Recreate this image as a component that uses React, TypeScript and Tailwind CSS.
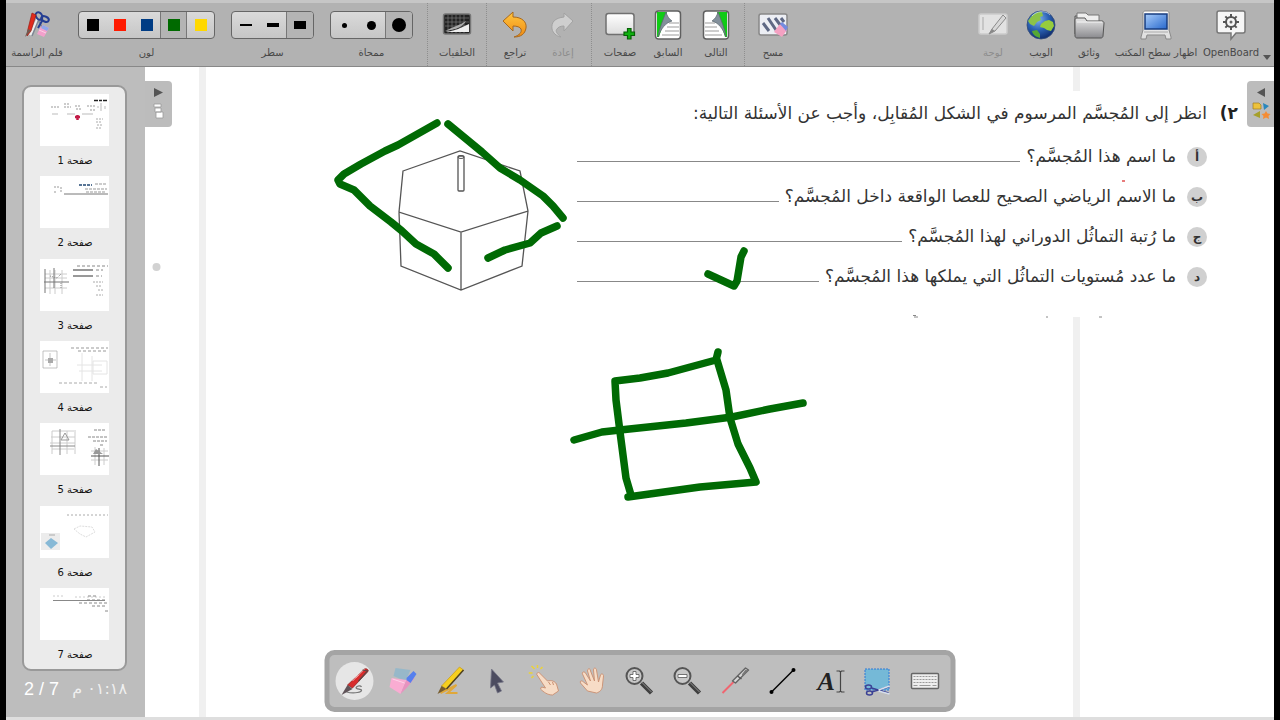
import { useState } from "react";
import type { ReactNode } from "react";
import clsx from "clsx";

interface ToolProps {
  label: string;
  className?: string;
  disabled?: boolean;
  children: ReactNode;
}

const ui = "font-['DejaVu_Sans',sans-serif]";

function Tool({ label, className = "w-12", disabled = false, children }: ToolProps) {
  return (
    <button
      disabled={disabled}
      className={clsx(
        "flex shrink-0 flex-col items-center text-[10px] leading-3 whitespace-nowrap",
        disabled ? "text-[#8c8c8c]" : "text-[#484848]",
        className
      )}
    >
      <span className="flex h-11 items-center">{children}</span>
      <span>{label}</span>
    </button>
  );
}

interface Option {
  name: string;
  mark: ReactNode;
}

// Segmented control used for colour, line and eraser sizes
function Group({ label, options, initial }: { label: string; options: Option[]; initial: number }) {
  const [active, setActive] = useState(initial);
  return (
    <div role="group" aria-label={label} className="flex shrink-0 flex-col items-center text-[10px] leading-3 text-[#484848]">
      <div className="flex h-11 items-center">
        <div className="flex h-7 overflow-hidden rounded border border-[#666] bg-linear-to-b from-[#dadada] to-[#c6c6c6]">
          {options.map((o, i) => (
            <button
              key={o.name}
              aria-label={o.name}
              aria-pressed={active === i}
              onClick={() => setActive(i)}
              className={clsx(
                "flex w-[27px] items-center justify-center",
                active === i && "border-l border-[#777] bg-[#b4b4b4]",
                active === i && i < options.length - 1 && "border-r"
              )}
            >
              {o.mark}
            </button>
          ))}
        </div>
      </div>
      <span>{label}</span>
    </div>
  );
}

const colors: Option[] = [
  { name: "أسود", mark: <span className="h-3 w-3 bg-black" /> },
  { name: "أحمر", mark: <span className="h-3 w-3 bg-[#ff1a00]" /> },
  { name: "أزرق", mark: <span className="h-3 w-3 bg-[#003c84]" /> },
  { name: "أخضر", mark: <span className="h-3 w-3 bg-[#006a00]" /> },
  { name: "أصفر", mark: <span className="h-3 w-3 bg-[#ffd800]" /> },
];

const lines: Option[] = [
  { name: "رفيع", mark: <span className="h-0.5 w-3 bg-black" /> },
  { name: "متوسط", mark: <span className="h-1 w-3 bg-black" /> },
  { name: "سميك", mark: <span className="h-2 w-3 bg-black" /> },
];

const erasers: Option[] = [
  { name: "صغير", mark: <span className="h-[5px] w-[5px] rounded-full bg-black" /> },
  { name: "وسط", mark: <span className="h-[9px] w-[9px] rounded-full bg-black" /> },
  { name: "كبير", mark: <span className="h-3.5 w-3.5 rounded-full bg-black" /> },
];

function Separator() {
  return <span className="w-px shrink-0 self-stretch border-l border-dotted border-[#8e8e8e]" />;
}

function Defs() {
  return (
    <svg width="0" height="0" className="absolute" aria-hidden="true">
      <defs>
        <linearGradient id="paper" x1="0" y1="0" x2="0" y2="1">
          <stop offset="0" stopColor="#fff" />
          <stop offset="1" stopColor="#dcdcdc" />
        </linearGradient>
        <linearGradient id="screen" x1="0" y1="0" x2="1" y2="1">
          <stop offset="0" stopColor="#a9cdfa" />
          <stop offset="1" stopColor="#2667cc" />
        </linearGradient>
        <linearGradient id="metal" x1="0" y1="0" x2="0" y2="1">
          <stop offset="0" stopColor="#e6e6e6" />
          <stop offset="1" stopColor="#8a8a8e" />
        </linearGradient>
        <linearGradient id="orange" x1="0" y1="0" x2="0" y2="1">
          <stop offset="0" stopColor="#ffc640" />
          <stop offset="1" stopColor="#f08c14" />
        </linearGradient>
        <radialGradient id="sea" cx="0.4" cy="0.3" r="0.75">
          <stop offset="0" stopColor="#82b4ee" />
          <stop offset="0.5" stopColor="#2b62b4" />
          <stop offset="1" stopColor="#0c2768" />
        </radialGradient>
      </defs>
    </svg>
  );
}

function PensIcon() {
  return (
    <svg width="32" height="32" viewBox="0 0 32 32">
      <path d="M17 10 9 26" stroke="#eee" strokeWidth="3" />
      <path d="M18 10 11 27M15 7l6 11" stroke="#7d8794" strokeWidth="1.5" />
      <g fill="none" stroke="#253e93" strokeWidth="2">
        <ellipse cx="18" cy="7" rx="3" ry="4" transform="rotate(-35 18 7)" />
        <ellipse cx="24" cy="10" rx="4" ry="2.5" transform="rotate(25 24 10)" />
        <path d="m20 10 1 2-4 7" />
      </g>
      <path d="m11 4 4 2-5 16-4 5 1-7z" fill="#e22a1c" stroke="#9b1b13" strokeWidth=".7" />
      <path d="m7 20 3 1.5L4 28z" fill="#6f5a50" />
      <path d="m19 19 3-3 6 3-5 9-7-3z" fill="#f3a0cc" />
      <path d="m22 16 6 3-2 3-6-3z" fill="#8fa8ea" />
      <path d="m18 21 7 3" stroke="#fbd0e6" />
    </svg>
  );
}

function BackgroundsIcon() {
  return (
    <svg width="32" height="32" viewBox="0 0 32 32">
      <rect x="2.5" y="5" width="27" height="20" rx="2" fill="#222" stroke="#777" strokeWidth="1.5" />
      <path d="M7 6v18M11 6v18M15 6v18M19 6v18M23 6v18M4 9h24M4 13h24M4 17h24" stroke="#777" strokeWidth=".7" />
      <path d="M4 23c9-1 16-4 24-8v8z" fill="#eee" />
      <path d="M4 22c8-4 15-6 21-10-3 6-11 9-21 10z" fill="#aaa" />
    </svg>
  );
}

function UndoIcon() {
  return (
    <svg width="32" height="32" viewBox="0 0 32 32">
      <path d="m4 12 10-9v5c9 0 14 5 13 11-1 6-5 9-12 9 6-2 8-5 7-8-1-2-4-3-8-3v5z" fill="url(#orange)" stroke="#a8681c" strokeWidth="1" strokeLinejoin="round" />
    </svg>
  );
}

function RedoIcon() {
  return (
    <svg width="32" height="32" viewBox="0 0 32 32">
      <path d="m26 12-9-8v4C8 9 4 13 5 20c1 4 4 7 9 8-4-3-6-6-4-8 1-2 4-3 7-3v5z" fill="#cfcfcf" stroke="#a2a2a2" strokeWidth="1" strokeLinejoin="round" />
    </svg>
  );
}

function NewPageIcon() {
  return (
    <svg width="32" height="32" viewBox="0 0 32 32">
      <rect x="2" y="4.500" width="28" height="21" rx="2.5" fill="url(#paper)" stroke="#707070" strokeWidth="1.5" />
      <path d="M23.500 19.500h3.500v3.500h3.500v3.500h-3.500V30h-3.500v-3.500H20V23h3.500z" fill="#10b010" stroke="#075f07" strokeWidth="1.200" />
    </svg>
  );
}

function PageTurnIcon({ flip = false }: { flip?: boolean }) {
  return (
    <svg width="32" height="32" viewBox="0 0 32 32" className={clsx(flip && "-scale-x-100")}>
      <rect x="3.500" y="2" width="25" height="28" rx="3" fill="#fff" stroke="#606060" strokeWidth="1.500" />
      <path d="M17 14h10M15 18h12M13 22h14M10 26h17" stroke="#9b9b9b" />
      <path d="M5 3h10L7 28H5z" fill="#10cb16" />
      <path d="M14 3c1 4 3 7 6 9-7 2-11 8-14 16 1-8 5-17 8-25z" fill="#83909b" stroke="#5a666d" strokeWidth=".7" />
    </svg>
  );
}

function EraseIcon() {
  return (
    <svg width="32" height="32" viewBox="0 0 32 32">
      <rect x="2" y="5" width="28" height="21" rx="2" fill="#eceef4" stroke="#888" strokeWidth="1.500" />
      <path d="m6 14 6 8M11 9l8 12M18 9l6 8M24 9l3 4" stroke="#5e6884" strokeWidth="3" />
      <path d="m19 20 4-5 7 6-5 7-8-5z" fill="#f4a1c2" />
      <path d="m23 15 2-2 6 5-2 4z" fill="#748be0" />
    </svg>
  );
}

function BoardIcon() {
  return (
    <svg width="32" height="32" viewBox="0 0 32 32">
      <rect x="2" y="5" width="28" height="20" rx="2" fill="#e2e2e2" stroke="#ccc" strokeWidth="1.500" />
      <path d="M6 8v13" stroke="#aaa" />
      <path d="m15 20 11-14 3 3-11 13-6 3z" fill="#d8d8d8" stroke="#8a8a8a" strokeWidth="1" />
      <path d="m12 25 3-5 3 2z" fill="#888" />
    </svg>
  );
}

function WebIcon() {
  return (
    <svg width="32" height="32" viewBox="0 0 32 32">
      <circle cx="16" cy="16" r="14" fill="url(#sea)" stroke="#364d79" strokeWidth=".8" />
      <path d="M6 8c3-4 8-6 11-5l1 4-3 1 1 3-4 2-3 4-4-2-2-3z" fill="#8cc348" />
      <path d="m16 15 4-3 4-1 4 2 1 4-3 5-4-1-3-2-4-1z" fill="#96cc3d" />
      <path d="m7 22 5-1 3 4v4c-4-1-7-3-8-7z" fill="#55a834" />
      <path d="M7 7c4-5 14-6 18-1" stroke="#d9e9ff" opacity=".6" fill="none" />
    </svg>
  );
}

function DocumentsIcon() {
  return (
    <svg width="32" height="32" viewBox="0 0 32 32">
      <path d="M2 7h9l2 3h10v15H2z" fill="#bbb" stroke="#555" />
      <path d="M4 4h9l2 2h11v8H4z" fill="#eee" stroke="#777" />
      <path d="M2 27V11c0-1 1-2 2-2h8l2 3h15c1 0 2 1 2 2l-1 13c0 1-1 2-2 2H4c-1 0-2-1-2-2z" fill="url(#metal)" stroke="#555" />
      <path d="M4 13h25" stroke="#f5f5f5" />
    </svg>
  );
}

function DesktopIcon() {
  return (
    <svg width="32" height="32" viewBox="0 0 32 32">
      <path d="M3 4c0-1 1-2 2-2h22c1 0 2 1 2 2v17l2 7v2h-5l-1-4H7l-1 4H1v-2l2-7z" fill="url(#paper)" stroke="#898989" />
      <rect x="5" y="5" width="22" height="15" fill="url(#screen)" stroke="#173c7f" strokeWidth="1.500" />
      <path d="M4 23h24" stroke="#aaa" />
    </svg>
  );
}

function OpenBoardIcon() {
  const teeth = [0, 45, 90, 135, 180, 225, 270, 315];
  return (
    <svg width="32" height="32" viewBox="0 0 32 32">
      <path d="M4 2h24c1 0 2 1 2 2v18c0 1-1 2-2 2h-7l-5 6v-6H4c-1 0-2-1-2-2V4c0-1 1-2 2-2z" fill="#f6f6f6" stroke="#777" strokeWidth="1.500" />
      <circle cx="16" cy="13" r="5" fill="none" stroke="#555" strokeWidth="2" />
      <circle cx="16" cy="13" r="1.500" fill="#666" />
      {teeth.map((a) => (
        <path key={a} d="M16 8V5" stroke="#555" strokeWidth="2" transform={`rotate(${a} 16 13)`} />
      ))}
    </svg>
  );
}

function Toolbar() {
  return (
    <header className={clsx("flex h-[67px] shrink-0 border-t-[3px] border-b border-t-[#c6c6c6] border-b-[#888] bg-[#b2b2b2]", ui)}>
      <Tool label="قلم الراسمة" className="mr-2.5 w-[62px]"><PensIcon /></Tool>
      <div className="mr-3.5 flex gap-4">
        <Group label="لون" options={colors} initial={3} />
        <Group label="سطر" options={lines} initial={2} />
        <Group label="ممحاة" options={erasers} initial={2} />
      </div>
      <Separator />
      <div className="flex px-[5px]">
        <Tool label="الخلفيات"><BackgroundsIcon /></Tool>
      </div>
      <Separator />
      <div className="flex px-1">
        <Tool label="تراجع"><UndoIcon /></Tool>
        <Tool label="إعادة" disabled><RedoIcon /></Tool>
      </div>
      <Separator />
      <div className="flex px-1">
        <Tool label="صفحات"><NewPageIcon /></Tool>
        <Tool label="السابق"><PageTurnIcon /></Tool>
        <Tool label="التالى"><PageTurnIcon flip /></Tool>
      </div>
      <Separator />
      <div className="flex px-1">
        <Tool label="مسح"><EraseIcon /></Tool>
      </div>
      <div className="ml-auto flex">
        <Tool label="لوحة" disabled><BoardIcon /></Tool>
        <Tool label="الويب"><WebIcon /></Tool>
        <Tool label="وثائق"><DocumentsIcon /></Tool>
        <Tool label="اظهار سطح المكتب" className="w-[86px]"><DesktopIcon /></Tool>
        <Tool label="OpenBoard" className="w-16"><OpenBoardIcon /></Tool>
        <button aria-label="القائمة" className="flex w-[11px] items-end pb-1.5">
          <svg width="8" height="5" viewBox="0 0 8 5"><path d="M0 0h8L4 5z" fill="#555" /></svg>
        </button>
      </div>
    </header>
  );
}

// Tiny previews of each page's content
const previews: ReactNode[] = [
  <>
    <path d="M54 6.500h13" stroke="#222" strokeWidth="1.500" strokeDasharray="4 1 3 1" />
    <path d="M11 13h8M24 13h7M35 12h6M47 12h8M24 10h5M36 15h5M50 16h5" stroke="#999" strokeDasharray="2 1" />
    <path d="M61 9v8M58 12v2M65 12v3M12 20h6M27 20h8M42 20h11" stroke="#bbb" />
    <path d="M35 23h5M37.500 21v5" stroke="#c31d48" strokeWidth="2.500" />
    <path d="M56 25h7M56 28h6M57 31h5M56 34h5" stroke="#aaa" strokeDasharray="2 1" />
  </>,
  <>
    <path d="M39 9h13" stroke="#587596" strokeWidth="2" strokeDasharray="3 1" />
    <path d="M55 8h12M45 13h22M46 16h20" stroke="#999" strokeDasharray="3 1" />
    <path d="M24 18h44" stroke="#777" />
    <path d="M14 11h6M21 11v6M14 16h3" stroke="#999" strokeDasharray="2 1" />
  </>,
  <>
    <path d="M5 15h22M5 19h22M5 29h22M10 11v24M15 11v24M22 11v24" stroke="#ccc" />
    <path d="M4 23h25M5 10v24M14 9v20" stroke="#777" />
    <path d="m10 17 7 2 4-4M21 24v5" stroke="#888" strokeDasharray="1 1" fill="none" />
    <path d="M33 11h20M33 17h20" stroke="#333" />
    <path d="M56 11h7M56 17h6M37 7h31" stroke="#888" strokeDasharray="3 2" />
    <path d="M53 23h10M56 27h6M58 31h5M56 36h7" stroke="#aaa" strokeDasharray="2 1" />
  </>,
  <>
    <path d="M3 10h14v17H3zM10 12v13M5 19h11" fill="none" stroke="#aaa" strokeWidth=".7" />
    <path d="M8 17h5v5H8z" fill="#aaa" />
    <path d="M31 7h37M38 10h29" stroke="#999" strokeDasharray="3 2" />
    <path d="M42 12v28M52 15v25M37 24h25M39 30h23M53 20h14v13H53z" fill="none" stroke="#e4e4e4" />
    <path d="M19 42h38M60 46h7" stroke="#aaa" strokeDasharray="3 2" />
  </>,
  <>
    <path d="M12 8h22M11 14h24M10 20h25M12 26h22M12 8v23M27 8v23M35 7v24" stroke="#ccc" />
    <path d="M10 23h25M20 6v26" stroke="#888" />
    <path d="m21 17 4-7 4 7z" fill="none" stroke="#999" />
    <path d="M54 7h12M48 14h19M53 18h14M60 22h4" stroke="#888" strokeDasharray="3 1" />
    <path d="M51 28h17M51 37h17M55 24v18M64 25v17" stroke="#ccc" />
    <path d="M51 33h18M59 25v18" stroke="#555" />
    <path d="m53 31 3-5 7 5z" fill="#999" />
  </>,
  <>
    <path d="M27 9h41" stroke="#aaa" strokeDasharray="2 2" />
    <path d="m34 23 6-3 12 1 3 5-9 5-6-3z" fill="none" stroke="#ddd" strokeDasharray="2 1" />
    <path d="M1 27h19v17H1z" fill="#ececec" />
    <path d="m5 37 6-5 7 5-7 6z" fill="#87b9d6" />
    <path d="M9 29h6" stroke="#aaa" />
  </>,
  <>
    <path d="M13 8h12M35 9h31" stroke="#ccc" strokeDasharray="2 2" />
    <path d="M13 12.500h52" stroke="#888" />
    <path d="M48 8h8M47 12h20M39 15h28M52 18h14M65 23h4" stroke="#888" strokeDasharray="3 2" />
  </>,
];

function Sidebar() {
  return (
    <aside className="flex w-[139px] shrink-0 flex-col bg-[#bdbdbd] pt-[18px] pr-[18px] pl-4">
      <ol className={clsx("flex flex-1 flex-col justify-between rounded-[9px] border-2 border-[#999] bg-[#ebebeb] pt-[7px] pb-1.5 text-[10px] leading-4 text-[#111]", ui)}>
        {previews.map((preview, i) => (
          <li key={i}>
            <button className="mx-auto flex flex-col items-center">
              <svg width="69" height="52" viewBox="0 0 69 52" className="bg-white">{preview}</svg>
              <span dir="rtl" className="mt-[7px] pl-px">صفحة {i + 1}</span>
            </button>
          </li>
        ))}
      </ol>
      <div className="flex h-[46px] justify-between pt-1.5 text-white">
        <span className="pl-0.5 font-['Liberation_Sans',sans-serif] text-[18px] leading-6 whitespace-nowrap">2 / 7</span>
        <span dir="rtl" className={clsx("text-[16px] leading-6 whitespace-nowrap text-[#f0f0f0]", ui)}>٠١:١٨ م</span>
      </div>
    </aside>
  );
}

const questions = [
  { letter: "أ", text: "ما اسم هذا المُجسَّم؟" },
  { letter: "ب", text: "ما الاسم الرياضي الصحيح للعصا الواقعة داخل المُجسَّم؟" },
  { letter: "ج", text: "ما رُتبة التماثُل الدوراني لهذا المُجسَّم؟" },
  { letter: "د", text: "ما عدد مُستويات التماثُل التي يملكها هذا المُجسَّم؟" },
];

function Worksheet() {
  return (
    <section dir="rtl" className={clsx("absolute top-6 right-9 w-[661px] bg-white pb-5 text-[17px] text-[#333]", ui)}>
      <h1 className="flex h-[46px] items-center whitespace-nowrap">
        <span className="w-[31px] font-bold text-[#222]">٢)</span>
        انظر إلى المُجسَّم المرسوم في الشكل المُقابِل، وأجب عن الأسئلة التالية:
      </h1>
      <ul className="pr-[31px]">
        {questions.map((q) => (
          <li key={q.letter} className="flex h-10 items-center whitespace-nowrap">
            <span className="ml-[11px] flex h-5 w-5 items-center justify-center rounded-full bg-[#d0d0d0] text-[12px] font-bold">{q.letter}</span>
            {q.text}
            <span className="mt-2 mr-1.5 h-px flex-1 bg-[#888]" />
          </li>
        ))}
      </ul>
    </section>
  );
}

function Canvas() {
  return (
    <main className="relative flex-1 overflow-hidden bg-white">
      <div className="absolute inset-y-0 right-[194px] left-[54px] border-x-[7px] border-[#f0f0f0]" />
      <Worksheet />
      <svg width="1129" height="650" viewBox="145 67 1129 650" fill="none" className="pointer-events-none absolute top-0 left-0">
        <circle cx="156.500" cy="267" r="4" fill="#d2d2d2" />
        <path d="m403 171 57-20 60 20 8 40-67 21-62-20zM399 212l2 54 60 24 61-24 6-55M461 232v58" stroke="#555" strokeWidth="1.300" />
        <rect x="458" y="156" width="6" height="35" rx="1" fill="#fff" stroke="#555" strokeWidth="1.300" />
        <ellipse cx="461" cy="157" rx="3" ry="1.500" stroke="#555" />
        <path d="M913 315.500h3M914 317h4M1046 317h2M1099 317h3" stroke="#888" />
        <path d="M1122 181h3" stroke="#e05050" strokeWidth="1.500" />
        {/* Pen strokes */}
        <g stroke="#006a04" strokeWidth="7.500" strokeLinecap="round" strokeLinejoin="round">
          <path d="M437 123 398 145 385 151 361 164 344 174 338 180 340 184 354 190 370 206 391 222 402 231 416 244 434 254 448 268" />
          <path d="M448 124 482 152 500 168 520 180 543 196 553 206 563 218" />
          <path d="M488 258 505 250 530 243 541 233 557 226" />
          <path d="M708 274 734 286 737 281 741 257 744 251" />
          <path d="M718 352 716 360 668 373 640 378 615 381 616 400 620 432 626 478 631 495" />
          <path d="M717 360 726 390 730 418 738 444 750 468 756 482 700 487 628 497" />
          <path d="M574 440 602 432 620 430 686 423 732 417 770 409 803 403" />
        </g>
      </svg>
      <button aria-label="الصفحات" className="absolute top-3.5 left-0 flex h-[46px] w-[27px] flex-col items-center rounded-r bg-[#bcbcbc] pt-1.5">
        <svg width="22" height="36" viewBox="0 0 22 36">
          <path d="m6 1 9 4.500L6 10z" fill="#555" />
          <path d="M6 17h7v3H6zM7 21h6v4H7zM8 25h7v6H8z" fill="#fff" stroke="#999" strokeWidth=".8" />
        </svg>
      </button>
      <button aria-label="المكتبة" className="absolute top-3.5 right-0 flex h-[46px] w-[27px] flex-col items-center rounded-l bg-[#bcbcbc] pt-1.5">
        <svg width="22" height="36" viewBox="0 0 22 36">
          <path d="m15 1-8 4.500 8 4.500z" fill="#555" />
          <path d="M3 16h6l2 2v4H3z" fill="#edc23a" stroke="#9e7d22" strokeWidth=".7" />
          <path d="m13 16 6 3-5 4z" fill="#2987bd" />
          <path d="m10 24-7 4 7 3z" fill="#a6a02b" />
          <path d="m16 24 1.500 2.500 3 .5-2 2 .5 3-3-1.500-3 1.500.5-3-2-2 3-.5z" fill="#f58c34" />
        </svg>
      </button>
    </main>
  );
}

const handFill = "#f7dcc6";

const stylusTools: Option[] = [
  {
    name: "قلم",
    mark: (
      <>
        <path d="M8 27c8 2 16 0 15-2-1-1-7-1-5-3 1-1 4-2 5 0" fill="none" stroke="#777" strokeWidth="1.200" />
        <path d="M26 4c2-1 5 1 3 3L14 23l-5-3z" fill="#d82c2c" stroke="#842020" strokeWidth=".7" />
        <path d="m26 4-9 9M20 10l-6 6" stroke="#f7b5b5" />
        <path d="M24 5l5 1-9 10" stroke="#5b4646" strokeWidth="1.200" fill="none" />
        <path d="m9 20 5 4-11 6z" fill="#5f5358" />
      </>
    ),
  },
  {
    name: "ممحاة",
    mark: (
      <>
        <path d="m9 3 15 2-5 11-12-5z" fill="#69b1d6" opacity=".45" />
        <path d="m5 13 15 2-6 14L3 22z" fill="#f9acd2" />
        <path d="m20 15 4-6 4 4-7 9-7 7z" fill="#e892c0" />
        <path d="m20 13 7-7 3 3-6 9-4-3z" fill="#5680ee" />
        <path d="m6 14 12 4" stroke="#fdd3e8" />
      </>
    ),
  },
  {
    name: "قلم تمييز",
    mark: (
      <>
        <path d="m7 28 16-8-9 8h10" fill="none" stroke="#e0a83a" strokeWidth="2" />
        <path d="m26 2 4 3-17 19-5-3z" fill="#f6cf1f" stroke="#c79a16" strokeWidth=".7" />
        <path d="M30 5 13 24" stroke="#4d4020" strokeWidth="1.500" />
        <path d="m8 21 5 3-9 5z" fill="#775c2d" />
      </>
    ),
  },
  {
    name: "تحديد",
    mark: <path d="m10 4 12 13-6 1 4 8-4 2-3-8-4 3z" fill="#4c4c60" stroke="#777788" strokeWidth=".8" />,
  },
  {
    name: "تفاعل",
    mark: (
      <>
        <path d="M3 1l3 3M9 0v3M14 2l-2 2M0 8h4M3 13l2-2" stroke="#ecd335" strokeWidth="1.500" />
        <path d="m8 9 2-2 9 9c4-1 7 0 9 3l2 7-6 4c-5 0-9-3-12-6l1-2 4 1z" fill={handFill} stroke="#c98f70" strokeWidth=".9" />
        <path d="m20 17 2 3M24 17l1 3" stroke="#c98f70" />
      </>
    ),
  },
  {
    name: "تحريك",
    mark: (
      <path d="M11 26 4 18c-1-2 1-3 3-1l4 3L6 9c-1-2 2-3 3-1l5 8-3-10c0-3 3-3 3 0l4 10-1-11c0-3 3-2 3 0l2 12 2-7c1-2 3-1 3 1l-1 9c0 5-3 7-6 8z" fill={handFill} stroke="#c98f70" strokeWidth=".9" />
    ),
  },
  {
    name: "تكبير",
    mark: (
      <>
        <circle cx="11" cy="11" r="8" fill="#c8c8c8" stroke="#555" strokeWidth="2" />
        <path d="m18 18 10 10" stroke="#3f3f3f" strokeWidth="4.500" />
        <path d="m18 17 10 10" stroke="#909090" />
        <path d="M9.500 6.500h3v3h3v3h-3v3h-3v-3h-3v-3h3z" fill="#fff" stroke="#555" strokeWidth=".8" />
      </>
    ),
  },
  {
    name: "تصغير",
    mark: (
      <>
        <circle cx="11" cy="11" r="8" fill="#c8c8c8" stroke="#555" strokeWidth="2" />
        <path d="m18 18 10 10" stroke="#3f3f3f" strokeWidth="4.500" />
        <path d="m18 17 10 10" stroke="#909090" />
        <path d="M6.500 9.500h9v3h-9z" fill="#fff" stroke="#555" strokeWidth=".8" />
      </>
    ),
  },
  {
    name: "مؤشر ليزر",
    mark: (
      <>
        <path d="m14 17-11 11" stroke="#f06570" strokeWidth="2" />
        <path d="m26 3 3 2-13 13-3-2z" fill="#d8d8d8" stroke="#666" strokeWidth="1.500" strokeLinejoin="round" />
        <path d="m18 11 4 3" stroke="#555" strokeWidth="1.500" />
        <path d="m27 5-4 5" stroke="#777" strokeWidth="2" />
      </>
    ),
  },
  {
    name: "خط",
    mark: (
      <>
        <path d="M5 27 27 5" stroke="#000" strokeWidth="1.500" />
        <circle cx="5" cy="27" r="2" fill="#000" />
        <circle cx="27" cy="5" r="2" fill="#000" />
      </>
    ),
  },
  {
    name: "نص",
    mark: (
      <>
        <text x="3" y="25" fontFamily="Liberation Serif, serif" fontSize="26" fontStyle="italic" fontWeight="bold" fill="#222">A</text>
        <path d="M22 6h3l1 1 1-1h3M26 7v19M22 27h3l1-1 1 1h3" fill="none" stroke="#444" strokeWidth="1.200" />
      </>
    ),
  },
  {
    name: "قص",
    mark: (
      <>
        <rect x="3.500" y="4" width="24" height="21" fill="#75b9d7" stroke="#2f78d6" strokeDasharray="2 1" />
        <g fill="none" stroke="#3b4094" strokeWidth="1.500">
          <ellipse cx="7" cy="22" rx="3" ry="2" />
          <ellipse cx="8" cy="28" rx="3" ry="2" />
          <path d="m10 23 17 5M10 27l17-5" />
        </g>
        <path d="m17 25 11-4M17 26l11 3" stroke="#d7dfec" strokeWidth="1.500" />
      </>
    ),
  },
  {
    name: "لوحة مفاتيح",
    mark: (
      <>
        <rect x="2" y="8.500" width="27" height="15" rx="1" fill="#eee" stroke="#666" strokeWidth="1.500" />
        <path d="M4 11.500h23M4 14.500h23M4 17.500h23" stroke="#999" strokeWidth="1.200" strokeDasharray="2 1" />
        <path d="M4 20.500h4M10 20.500h11M23 20.500h4" stroke="#999" strokeWidth="1.200" />
      </>
    ),
  },
];

function StylusPalette() {
  const [active, setActive] = useState(0);
  return (
    <div role="toolbar" className="absolute bottom-2 left-1/2 flex h-[62px] w-[631px] -translate-x-1/2 items-center justify-between rounded-[10px] border-[5px] border-[#a4a4a4] bg-[#bebebe] px-1.5">
      {stylusTools.map((t, i) => (
        <button
          key={t.name}
          aria-label={t.name}
          aria-pressed={active === i}
          onClick={() => setActive(i)}
          className={clsx("flex h-[38px] w-[38px] items-center justify-center rounded-full", active === i && "bg-[#e6e6e6]")}
        >
          <svg width="32" height="32" viewBox="0 0 32 32">{t.mark}</svg>
        </button>
      ))}
    </div>
  );
}

function App() {
  return (
    <div className="relative flex min-h-screen flex-col bg-black px-1.5">
      <Defs />
      <Toolbar />
      <div className="flex flex-1">
        <Sidebar />
        <Canvas />
      </div>
      <div className="h-[3px] bg-[#dedede]" />
      <StylusPalette />
    </div>
  );
}

export default App;
